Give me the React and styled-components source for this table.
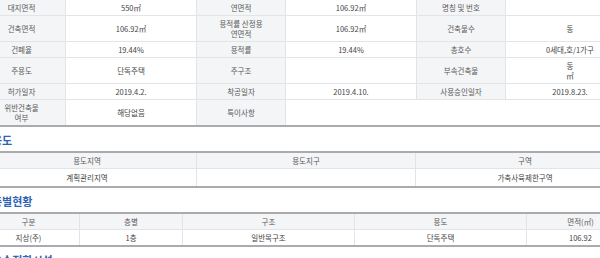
import React from "react";
import styled, { createGlobalStyle } from "styled-components";

const GlobalStyles = createGlobalStyle`
	html, body {
		margin: 0;
		padding: 0;
		background: #fff;
		overflow: hidden;
	}
	body {
		font-family: "Noto Sans CJK KR", "Noto Sans", sans-serif;
		color: #4a4a4a;
	}
`;

const Page = styled.div`
	width: 657px;
	margin-left: -22px;
`;

const Grid = styled.div`
	display: grid;
	grid-template-columns: ${(p) => p.cols};
	border-top: ${(p) => (p.topLine ? "2px solid #a9abae" : "none")};
	border-bottom: 2px solid #a9abae;
`;

const Cell = styled.div`
	display: flex;
	flex-direction: column;
	align-items: center;
	justify-content: center;
	text-align: center;
	font-size: 7.5px;
	line-height: 10px;
	padding: ${(p) => (p.tall ? "4px 0 3px" : "3px 0 2px")};
	background: ${(p) => (p.head ? "#f4f5f7" : "#fff")};
	color: ${(p) => (p.head ? "#5a5a5a" : "#444")};
	border-bottom: ${(p) => (p.last ? "none" : "1px solid #e2e4e7")};
	border-right: 1px solid #e2e4e7;
	white-space: nowrap;
	grid-column: ${(p) => (p.span ? `span ${p.span}` : "auto")};
`;

const Heading = styled.h3`
	margin: 0;
	padding: 6px 0 3px 14px;
	font-size: 11px;
	line-height: 15px;
	font-weight: 700;
	color: #2f64b4;
`;

const info = [
	["대지면적", "550㎡", "연면적", "106.92㎡", "명칭 및 번호", ""],
	["건축면적", "106.92㎡", "용적률 산정용\n연면적", "106.92㎡", "건축물수", "동"],
	["건폐율", "19.44%", "용적률", "19.44%", "총호수", "0세대,호/1가구"],
	["주용도", "단독주택", "주구조", "", "부속건축물", "동\n㎡"],
	["허가일자", "2019.4.2.", "착공일자", "2019.4.10.", "사용승인일자", "2019.8.23."],
];

const lines = (text) =>
	text.split("\n").map((t, i) => <span key={i}>{t}</span>);

const App = () => {
	return (
		<>
			<GlobalStyles />
			<Page>
				<Grid cols="88px 131px 89px 131px 89px 129px">
					{info.map((row, r) =>
						row.map((text, c) => (
							<Cell key={r + "-" + c} head={c % 2 === 0}>
								{lines(text)}
							</Cell>
						))
					)}
					<Cell head last>{lines("위반건축물\n여부")}</Cell>
					<Cell last>해당없음</Cell>
					<Cell head last>특이사항</Cell>
					<Cell last span={3}></Cell>
				</Grid>

				<Heading>용도</Heading>
				<Grid topLine cols="219px 219px 219px">
					<Cell head>용도지역</Cell>
					<Cell head>용도지구</Cell>
					<Cell head>구역</Cell>
					<Cell tall last>계획관리지역</Cell>
					<Cell tall last></Cell>
					<Cell tall last>가축사육제한구역</Cell>
				</Grid>

				<Heading>층별현황</Heading>
				<Grid topLine cols="102px 103px 172px 172px 108px">
					<Cell head>구분</Cell>
					<Cell head>층별</Cell>
					<Cell head>구조</Cell>
					<Cell head>용도</Cell>
					<Cell head>면적(㎡)</Cell>
					<Cell last>지상(주)</Cell>
					<Cell last>1층</Cell>
					<Cell last>일반목구조</Cell>
					<Cell last>단독주택</Cell>
					<Cell last>106.92</Cell>
				</Grid>

				<Heading>오수정화시설</Heading>
			</Page>
		</>
	);
};

export default App;
